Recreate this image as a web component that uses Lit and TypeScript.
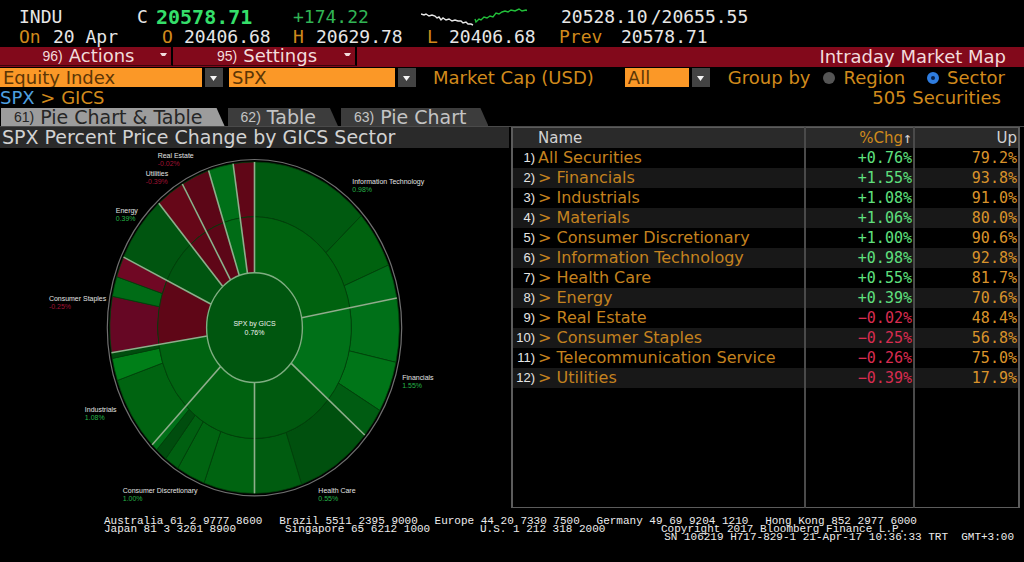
import { LitElement, html, svg, css } from "lit";
import { customElement, state } from "lit/decorators.js";
import { classMap } from "lit/directives/class-map.js";

const CX = 255;
const CY = 328;
const RATIO = 1.145;
const R_HUB = 48;
const R_MID = 97;
const R_OUT = 145;

const point = (r: number, deg: number) => {
  const a = (deg * Math.PI) / 180;
  return `${(CX + r * Math.sin(a)).toFixed(2)} ${(CY - r * RATIO * Math.cos(a)).toFixed(2)}`;
};

const ring = (r0: number, r1: number, a0: number, a1: number) =>
  `M${point(r0, a0)}L${point(r1, a0)}A${r1} ${r1 * RATIO} 0 0 1 ${point(r1, a1)}` +
  `L${point(r0, a1)}A${r0} ${r0 * RATIO} 0 0 0 ${point(r0, a0)}Z`;

type Slice = [from: number, to: number, fill: string];

const SECTORS: Slice[] = [
  [0, 79.7, "#00620f"],
  [79.7, 130.4, "#007118"],
  [130.4, 180, "#005a0f"],
  [180, 225, "#006210"],
  [225, 261.3, "#006411"],
  [261.3, 295.2, "#5f0617"],
  [295.2, 318.6, "#005510"],
  [318.6, 330.1, "#5f0617"],
  [330.1, 341.5, "#5c0617"],
  [341.5, 351.5, "#006c16"],
  [351.5, 360, "#5f0617"],
];

const INDUSTRIES: Slice[] = [
  [0, 47.5, "#005a10"],
  [47.5, 67.8, "#00620f"],
  [67.8, 79.7, "#006d18"],
  [79.7, 102.1, "#007018"],
  [102.1, 120, "#007518"],
  [120, 130.4, "#005c12"],
  [130.4, 161, "#00500e"],
  [161, 180, "#005c10"],
  [180, 200.4, "#006411"],
  [200.4, 212, "#006411"],
  [212, 217.8, "#006011"],
  [217.8, 222.5, "#004d0e"],
  [222.5, 225, "#007018"],
  [225, 251.4, "#006411"],
  [251.4, 259.3, "#007f18"],
  [259.3, 261.3, "#004d0e"],
  [261.3, 280.9, "#660724"],
  [280.9, 287.9, "#006c16"],
  [287.9, 295.2, "#700824"],
  [295.2, 318.6, "#005510"],
  [318.6, 330.1, "#660718"],
  [330.1, 341.5, "#5c0617"],
  [341.5, 351.5, "#007018"],
  [351.5, 360, "#600617"],
];

type Label = [x: number, y: number, name: string, value: string];

const LABELS: Label[] = [
  [158, 158, "Real Estate", "-0.02%"],
  [146, 176, "Utilities", "-0.39%"],
  [116, 213, "Energy", "0.39%"],
  [49, 301, "Consumer Staples", "-0.25%"],
  [85, 413, "Industrials", "1.08%"],
  [123, 494, "Consumer Discretionary", "1.00%"],
  [319, 494, "Health Care", "0.55%"],
  [403, 380, "Financials", "1.55%"],
  [353, 184, "Information Technology", "0.98%"],
];

const ROWS: [name: string, change: string, up: string][] = [
  ["All Securities", "+0.76%", "79.2%"],
  ["> Financials", "+1.55%", "93.8%"],
  ["> Industrials", "+1.08%", "91.0%"],
  ["> Materials", "+1.06%", "80.0%"],
  ["> Consumer Discretionary", "+1.00%", "90.6%"],
  ["> Information Technology", "+0.98%", "92.8%"],
  ["> Health Care", "+0.55%", "81.7%"],
  ["> Energy", "+0.39%", "70.6%"],
  ["> Real Estate", "−0.02%", "48.4%"],
  ["> Consumer Staples", "−0.25%", "56.8%"],
  ["> Telecommunication Service", "−0.26%", "75.0%"],
  ["> Utilities", "−0.39%", "17.9%"],
];

@customElement("sector-pie")
export class SectorPie extends LitElement {
  static styles = css`
    :host { display: block; }
    .chart { display: block; width: 100%; height: auto; }
    .seam { stroke: #00400a; stroke-width: 0.8; }
    .spoke { stroke: #8fae8c; stroke-width: 1.6; }
    .rim { fill: none; stroke: #6f6f6f; stroke-width: 1.2; }
    .hub { fill: #00560f; stroke: #7fae82; stroke-width: 1.4; }
    .label { font: 7px "Liberation Sans", sans-serif; fill: #e4e4e4; }
    .gain { fill: #25b548; }
    .loss { fill: #a01234; }
    .center { text-anchor: middle; fill: #f0f4f0; }
  `;

  render() {
    return html`
      <svg class="chart" viewBox="0 148 510 359" role="img" aria-label="SPX by GICS">
        <ellipse class="rim" cx=${CX} cy=${CY} rx="147.5" ry="168.5"></ellipse>
        ${INDUSTRIES.map(([a, b, fill]) => svg`<path class="seam" d=${ring(R_MID, R_OUT, a, b)} fill=${fill} />`)}
        ${SECTORS.map(([a, b, fill]) => svg`<path class="seam" d=${ring(R_HUB, R_MID, a, b)} fill=${fill} />`)}
        ${SECTORS.map(([a]) => svg`<path class="spoke" d=${`M${point(R_HUB, a)}L${point(R_OUT, a)}`} />`)}
        <ellipse class="hub" cx=${CX} cy=${CY} rx=${R_HUB} ry=${R_HUB * RATIO}></ellipse>
        <text class="label center" x=${CX} y="326">SPX by GICS</text>
        <text class="label center" x=${CX} y="335">0.76%</text>
        ${LABELS.map(
          ([x, y, name, value]) => svg`
            <text class="label" x=${x} y=${y}>${name}</text>
            <text class="label ${value.startsWith("-") ? "loss" : "gain"}" x=${x} y=${y + 8}>${value}</text>`
        )}
      </svg>
    `;
  }
}

@customElement("app-root")
export class AppRoot extends LitElement {
  @state() private tab = 0;
  @state() private group = "Sector";

  static styles = css`
    :host {
      display: flex;
      flex-direction: column;
      box-sizing: border-box;
      min-height: 100vh;
      background: #000;
      color: #e6e6e6;
      font: 18px/20px "DejaVu Sans", sans-serif;
      white-space: nowrap;
    }
    * { box-sizing: border-box; }
    button, select { font: inherit; color: inherit; border: 0; border-radius: 0; padding: 0; margin: 0; background: none; text-align: left; }

    .quote { padding: 7px 0 0 19px; font: 18px/20px "DejaVu Sans Mono", monospace; }
    .line { display: grid; align-items: center; }
    .last { grid-template-columns: 118px 19px 137px 128px 140px auto; }
    .ohlc { grid-template-columns: 34px 109px 22px 109px 23px 111px 22px 110px 62px auto; }
    .price { font-size: 20px; font-weight: bold; color: #35df6a; }
    .change { color: #31b455; }
    .amber { color: #d08a1c; }
    .spark { display: block; width: 106px; height: 20px; }
    .range { display: flex; gap: 3px; }

    .menu { display: flex; height: 20px; background: #82091b; color: #f2dcdc; }
    .action {
      display: flex; align-items: center; justify-content: center; gap: 6px;
      width: 184px; height: 19px; padding: 0 8px 0 14px; position: relative;
      border-right: 2px solid #000; border-bottom: 1px solid #3b040c;
    }
    .first { width: 173px; }
    .caret { position: absolute; right: 4px; top: 6px; width: 7px; height: 4px; fill: #f2dcdc; }
    .key { min-width: 20px; font: 14px/18px "Liberation Sans", sans-serif; }
    .heading { margin: 0 18px 0 auto; font: inherit; }

    .filters { display: flex; align-items: center; height: 21px; color: #d08a1c; }
    .field { position: relative; display: block; height: 19px; margin-right: 6px; }
    .index { width: 223px; }
    .ticker { width: 187px; margin-right: 17px; }
    .cap { width: 85px; margin-right: 18px; }
    .select {
      appearance: none; display: block; width: 100%; height: 19px; padding-left: 3px; line-height: 19px; color: #5c3606;
      background: linear-gradient(90deg, #fb9827 calc(100% - 21px), #000 calc(100% - 21px), #000 calc(100% - 18px), #434343 calc(100% - 18px));
    }
    .down { position: absolute; right: 6px; top: 8px; width: 7px; height: 5px; fill: #f4f4f4; pointer-events: none; }
    .caption { margin-right: 31px; }
    .choices { display: flex; align-items: center; flex: 1; gap: 13px; }
    .choice { display: flex; align-items: center; gap: 8px; }
    .sector { margin-left: 9px; }
    .radio { appearance: none; width: 12px; height: 12px; margin: 0; border-radius: 50%; background: #555; }
    .radio:checked { background: #07214a; border: 4px solid #2f7de0; }

    .crumbs { display: flex; justify-content: space-between; height: 20px; padding-right: 23px; line-height: 19px; color: #d08a1c; }
    .crumb { color: #4fa0e0; text-decoration: none; }

    .tabs { display: flex; gap: 3px; height: 18px; padding-left: 1px; font-size: 19px; line-height: 18px; }
    .tab {
      display: flex; align-items: center; gap: 6px; height: 18px; padding: 0 22px 0 13px;
      background: #3c3c3c; color: #c4c4c4;
      clip-path: polygon(0 0, calc(100% - 8px) 0, 100% 100%, 0 100%);
    }
    .active { background: #9c9c9c; color: #262626; }

    .main { display: grid; grid-template-columns: minmax(0, 509fr) minmax(0, 509fr); column-gap: 2px; flex: 1; padding-right: 4px; border-top: 1px solid #4a4a4a; }
    .title { margin: 0; height: 21px; padding-left: 2px; font: inherit; font-size: 19px; line-height: 21px; background: #2a2a2a; color: #d2d2d2; overflow: hidden; }

    .grid { width: 100%; height: 100%; border-collapse: collapse; table-layout: fixed; border: 2px solid #5c5c5c; border-width: 1px 2px; font-size: 16px; }
    .grid th { height: 20px; padding: 0; background: #2a2a2a; color: #d2d2d2; font-size: 15px; font-weight: normal; line-height: 20px; text-align: right; }
    .grid td { height: 20px; padding: 0; line-height: 20px; }
    .grid .name { text-align: left; color: #c4821f; }
    .grid th.name { color: #d2d2d2; }
    .grid .num { border-left: 2px solid #4a4a4a; padding-right: 1px; text-align: right; }
    .grid td.num { font: 15px/20px "DejaVu Sans Mono", monospace; }
    .grid .sorted { color: #d08a1c; }
    .arrow { color: #d2d2d2; font-family: "DejaVu Sans Mono", monospace; }
    .even { background: #181818; }
    .num-col { width: 26px; }
    .chg-col { width: 109px; }
    .up-col { width: 105px; }
    .grid .ord { padding-right: 3px; text-align: right; font: 13px/20px "Liberation Sans", sans-serif; }
    .grid .up { color: #5fe07f; }
    .grid .down-chg { color: #d92c50; }
    .grid .share { color: #d9932b; }
    .filler td { height: auto; }

    .footer { padding: 9px 10px 21px 104px; font: 11px/8px "Liberation Mono", monospace; color: #ececec; }
    .offices { display: flex; justify-content: space-between; padding-right: 97px; }
    .more { display: grid; grid-template-columns: 181px 195px 181px auto; white-space: pre; }
    .session { text-align: right; white-space: pre; }
  `;

  private key(n: string) {
    return html`<span class="key">${n})</span>`;
  }

  private dropdown(cls: string, label: string, value: string) {
    return html`<label class="field ${cls}">
      <select class="select" aria-label=${label}><option>${value}</option></select>
      <svg class="down" viewBox="0 0 7 5"><path d="M0 0H7L3.5 5Z" /></svg>
    </label>`;
  }

  private radio(name: string) {
    return html`<label class="choice ${name.toLowerCase()}">
      <input class="radio" type="radio" name="group" .checked=${this.group === name} @change=${() => (this.group = name)} />${name}
    </label>`;
  }

  render() {
    const caret = html`<svg class="caret" viewBox="0 0 7 4"><path d="M0 0H7L5 3H2Z" /></svg>`;
    const tabs = ["Pie Chart & Table", "Table", "Pie Chart"];
    return html`
      <header class="quote">
        <div class="line last">
          <span>INDU</span><span>C</span><span class="price">20578.71</span><span class="change">+174.22</span>
          <svg class="spark" viewBox="0 0 106 20" fill="none" stroke-width="1.4" aria-hidden="true">
            <path stroke="#e8e8e8" d="M0 7l3 1 2-1 3 2 3-1 3 1 2 2 2-1 2 3 2-2 3 2 3-1 3 2 3-1 3 1 3 0 2 2 3-1 2 2 3 0 2 1" />
            <path stroke="#22c03a" d="M54 12l1 3 3-3 2 1 3-3 3 1 3-2 3 1 3-4 3 1 3-2 3-1 3 1 3-2 4 1 4-2 3 2 4-1 2 1" />
          </svg>
          <span class="range"><span>20528.10</span><span>/20655.55</span></span>
        </div>
        <div class="line ohlc">
          <span class="amber">On</span><span>20 Apr</span>
          <span class="amber">O</span><span>20406.68</span>
          <span class="amber">H</span><span>20629.78</span>
          <span class="amber">L</span><span>20406.68</span>
          <span class="amber">Prev</span><span>20578.71</span>
        </div>
      </header>

      <nav class="menu">
        <button class="action first">${this.key("96")}<span>Actions</span>${caret}</button>
        <button class="action">${this.key("95")}<span>Settings</span>${caret}</button>
        <h1 class="heading">Intraday Market Map</h1>
      </nav>

      <div class="filters">
        ${this.dropdown("index", "Asset class", "Equity Index")}
        ${this.dropdown("ticker", "Index", "SPX")}
        <span class="caption">Market Cap (USD)</span>
        ${this.dropdown("cap", "Market Cap (USD)", "All")}
        <div class="choices" role="radiogroup" aria-label="Group by">
          <span>Group by</span>${this.radio("Region")}${this.radio("Sector")}
        </div>
      </div>

      <div class="crumbs">
        <span><a class="crumb" href="#spx">SPX</a> &gt; GICS</span>
        <span>505 Securities</span>
      </div>

      <div class="tabs" role="tablist">
        ${tabs.map(
          (t, i) => html`<button role="tab" aria-selected=${this.tab === i} class=${classMap({ tab: true, active: this.tab === i })} @click=${() => (this.tab = i)}>
            ${this.key(String(61 + i))}<span>${t}</span>
          </button>`
        )}
      </div>

      <main class="main">
        <section>
          <h2 class="title">SPX Percent Price Change by GICS Sector</h2>
          <sector-pie></sector-pie>
        </section>
        <table class="grid">
          <colgroup><col class="num-col" /><col /><col class="chg-col" /><col class="up-col" /></colgroup>
          <thead>
            <tr><th></th><th class="name">Name</th><th class="num sorted">%Chg<span class="arrow">↑</span></th><th class="num">Up</th></tr>
          </thead>
          <tbody>
            ${ROWS.map(
              ([name, chg, up], i) => html`<tr class=${classMap({ even: i % 2 === 1 })}>
                <td class="ord">${i + 1})</td>
                <td class="name">${name}</td>
                <td class="num ${chg.startsWith("+") ? "up" : "down-chg"}">${chg}</td>
                <td class="num share">${up}</td>
              </tr>`
            )}
            <tr class="filler"><td></td><td></td><td class="num"></td><td class="num"></td></tr>
          </tbody>
        </table>
      </main>

      <footer class="footer">
        <div class="offices">
          <span>Australia 61 2 9777 8600</span><span>Brazil 5511 2395 9000</span><span>Europe 44 20 7330 7500</span>
          <span>Germany 49 69 9204 1210</span><span>Hong Kong 852 2977 6000</span>
        </div>
        <div class="more">
          <span>Japan 81 3 3201 8900</span><span>Singapore 65 6212 1000</span><span>U.S. 1 212 318 2000</span><span>Copyright 2017 Bloomberg Finance L.P.</span>
        </div>
        <div class="session">SN 106219 H717-829-1 21-Apr-17 10:36:33 TRT  GMT+3:00</div>
      </footer>
    `;
  }
}
